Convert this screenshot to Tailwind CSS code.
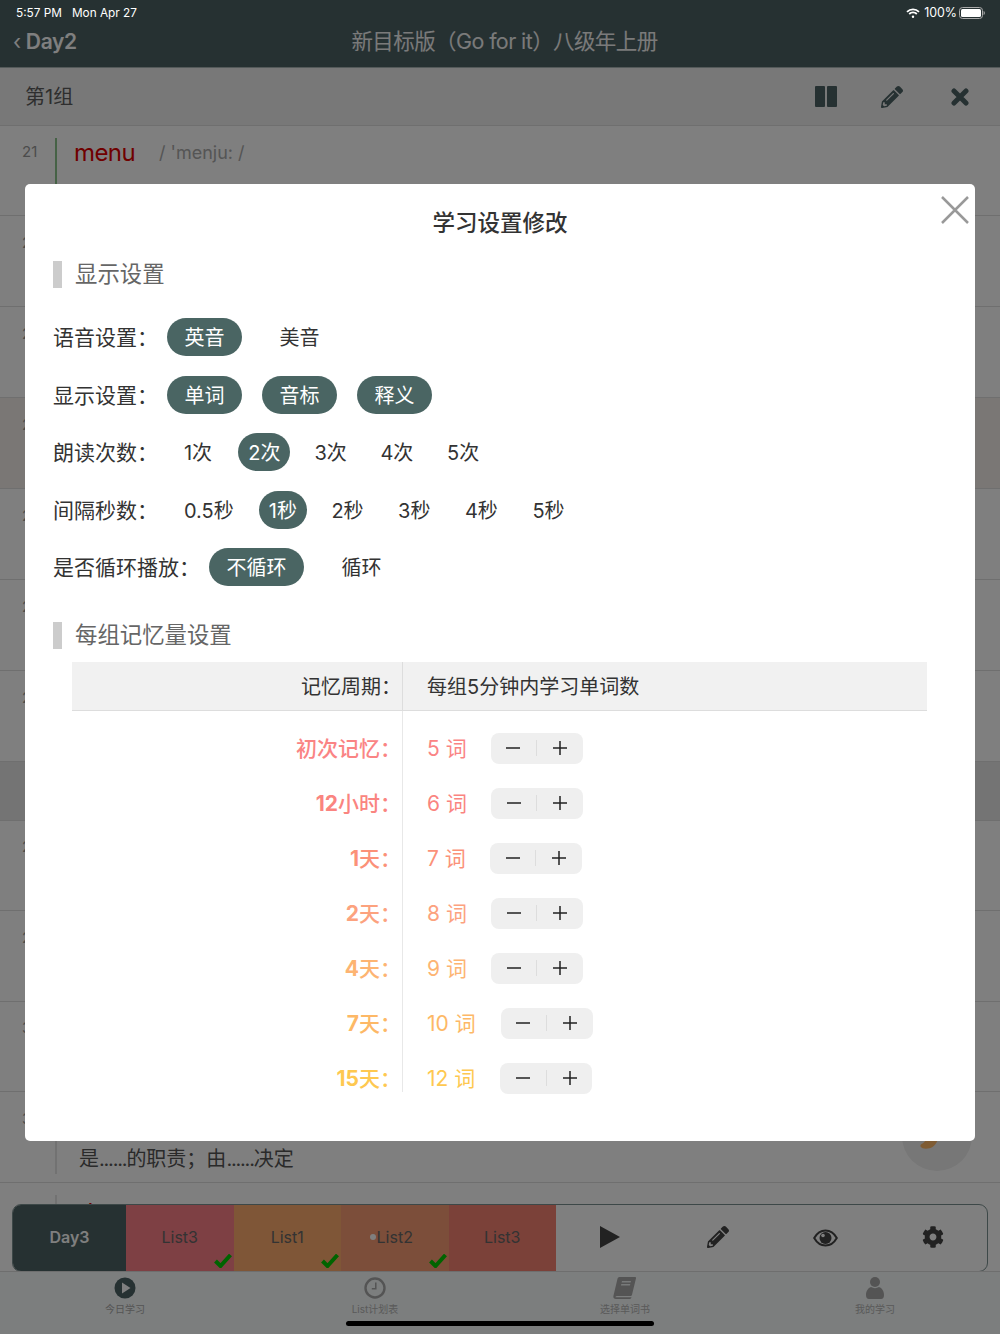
<!DOCTYPE html>
<html lang="zh">
<head>
<meta charset="UTF-8" />
<title>学习设置修改</title>
<script src="https://cdn.jsdelivr.net/npm/@tailwindcss/browser@4"></script>
</head>
<body class="bg-white">
<div class="relative w-[1000px] h-[1334px] overflow-hidden flex flex-col bg-white font-['Inter','Noto_Sans_CJK_SC',sans-serif]">

    <!-- nav -->
    <div class="h-[68px] shrink-0 bg-[#4c6264] border-b border-[#a8b4b4] relative">
        <div class="relative z-20 h-6 px-4 pt-[3px] flex items-center justify-between text-white text-[11.800px]">
            <div class="flex gap-[10px]"><span>5:57 PM</span><span>Mon Apr 27</span></div>
            <div class="flex items-center text-[12.400px] -mr-[1px]">
                <svg width="14" height="11" viewBox="0 0 14 11" fill="none" stroke="#fff" stroke-width="1.800"><path d="M1 3.800a8.500 8.500 0 0 1 12 0M3.200 6a5.400 5.400 0 0 1 7.600 0"/><circle cx="7" cy="8.800" r="1.200" fill="#fff" stroke="none"/></svg>
                <span class="ml-[4px] mr-[2px]">100%</span>
                <svg width="26" height="12" viewBox="0 0 26 12"><rect x=".5" y=".5" width="23" height="11" rx="3" fill="none" stroke="#aaa"/><rect x="2" y="2" width="20" height="8" rx="1.500" fill="#fff"/><path d="M24.600 4v4c.8-.3 1.200-1 1.200-2s-.4-1.700-1.200-2z" fill="#aaa"/></svg>
            </div>
        </div>
        <div class="flex items-center h-[35px] relative">
            <div class="absolute left-[13px] text-white text-[21px] font-semibold tracking-[-0.3px] leading-[35px]"><span class="font-normal">‹</span> Day2</div>
            <div class="w-full pl-[9px] text-center text-[21.500px] tracking-[-0.6px] leading-[35px] text-[#f4f4f4]">新目标版（Go for it）八级年上册</div>
        </div>
    </div>

    <!-- group bar -->
    <div class="h-[58px] shrink-0 bg-[#f0f0f0] border-b border-[#dedede] flex items-center pl-[25px]">
        <div class="text-[20px] text-[#5c5c5c]">第1组</div>
        <div class="ml-auto flex items-center text-[#4c6264]">
            <div class="w-[66px] pl-[2px] flex justify-center"><svg width="24" height="22" viewBox="0 0 24 22" fill="#4c6264"><rect x="1" y="0" width="10" height="21" rx="1"/><rect x="13" y="0" width="10" height="21" rx="1"/></svg></div>
            <div class="w-[68px] flex justify-center"><svg width="22" height="22" viewBox="0 0 512 512" fill="#4c6264"><path d="M497.900 142.100l-46.100 46.100c-4.700 4.700-12.300 4.700-17 0l-111-111c-4.700-4.700-4.700-12.300 0-17l46.100-46.100c18.700-18.700 49.100-18.700 67.900 0l60.100 60.100c18.800 18.700 18.800 49.100 0 67.900zM284.200 99.800L21.600 362.400.4 483.900c-2.900 16.400 11.400 30.600 27.800 27.800l121.500-21.300 262.600-262.600c4.700-4.700 4.700-12.300 0-17l-111-111c-4.800-4.700-12.400-4.700-17.100 0zM124.100 339.900c-5.500-5.500-5.500-14.300 0-19.800l154-154c5.500-5.500 14.300-5.500 19.800 0s5.500 14.300 0 19.800l-154 154c-5.500 5.500-14.300 5.500-19.800 0zM88 424h48v36.300l-64.500 11.300-31.100-31.100L51.700 376H88v48z"/></svg></div>
            <div class="w-[74px] pr-[6px] flex justify-center"><svg width="18" height="18" viewBox="0 0 18 18" stroke="#4c6264" stroke-width="5" stroke-linecap="round"><path d="M3 3l12 12M15 3L3 15"/></svg></div>
        </div>
    </div>

    <!-- word list behind the dialog -->
    <div class="relative flex-1 overflow-hidden text-[#999]">
        <div class="h-[90px] border-b border-[#dedede] flex pt-[12px]">
            <div class="w-[55px] pl-[22px] pt-[3px] text-[15px]">21</div>
            <div class="border-l-2 border-[#8cc48c] pl-[17px] h-[70px]">
                <div class="flex items-baseline -mt-[3px]"><span class="text-[24px] tracking-[-0.6px] text-[#e00000]">menu</span><span class="ml-[24px] -translate-y-0.5 text-[18px] text-[#aaa]">/ 'menju: /</span></div>
                <div class="pl-[17px] mt-[9px] text-[20px] text-[#555]">n. 菜单</div>
            </div>
        </div>
        <div class="h-[91px] border-b border-[#dedede] pl-[22px] pt-[16px] text-[15px]">22</div>
        <div class="h-[91px] border-b border-[#dedede] pl-[22px] pt-[16px] text-[15px]">23</div>
        <div class="h-[91px] border-b border-[#dedede] bg-[#f4eeea] pl-[22px] pt-[16px] text-[15px]">24</div>
        <div class="h-[91px] border-b border-[#dedede] pl-[22px] pt-[16px] text-[15px]">25</div>
        <div class="h-[91px] border-b border-[#dedede] pl-[22px] pt-[16px] text-[15px]">26</div>
        <div class="h-[91px] border-b border-[#dedede] pl-[22px] pt-[16px] text-[15px]">27</div>
        <div class="h-[59px] bg-[#e8e8e8] border-b border-[#dedede]"></div>
        <div class="h-[90px] border-b border-[#dedede] pl-[22px] pt-[15px] text-[15px]">28</div>
        <div class="h-[91px] border-b border-[#dedede] pl-[22px] pt-[16px] text-[15px]">29</div>
        <div class="h-[90px] border-b border-[#dedede] pl-[22px] pt-[15px] text-[15px]">30</div>
        <div class="h-[91px] border-b border-[#dedede] flex pt-[12px]">
            <div class="w-[55px] pl-[22px] pt-[4px] text-[15px]">31</div>
            <div class="border-l-2 border-[#e4e4e4] pl-[22px] h-[70px] flex items-end">
                <div class="text-[20px] text-[#555]">是<span class="tracking-[-1.200px]">......</span>的职责；由<span class="tracking-[-1.200px]">......</span>决定</div>
            </div>
        </div>
        <div class="flex pt-[12px]">
            <div class="w-[55px] pl-[22px] pt-[6px] text-[15px]">32</div>
            <div class="border-l-2 border-[#e4e4e4] pl-[17px]">
                <span class="text-[24px] text-[#e00000]">alarm</span><span class="ml-[10px] text-[19px] text-[#aaa]">/ ə'lɑ:m /</span>
            </div>
        </div>
        <!-- round speaker button -->
        <div class="absolute left-[902px] top-[975px] w-[70px] h-[70px] rounded-full bg-[#eeeeee]">
            <svg class="absolute left-[18px] top-[30px]" width="20" height="22" viewBox="0 0 20 22" fill="#ffb868"><path d="M7 0h12.500c-.5 7-2.500 13-7 16-3.500 2-10 2.500-12-.5-.5-1.500.5-2.500 2-3 2-1 3-3 3.500-5z"/></svg>
        </div>
    </div>

    <!-- play bar -->
    <div class="absolute left-[12px] top-[1204px] w-[976px] h-[68px] rounded-[9px] border border-[#7b9090] bg-[#ffffff] overflow-hidden flex text-[16px] text-[#666]">
        <div class="w-[113px] bg-[#4c6264] flex items-center justify-center text-white font-semibold pb-[2px]">Day3</div>
        <div class="w-[107.500px] bg-[#fc8088] relative flex items-center justify-center pb-[2px]">List3
            <svg class="absolute right-[2px] bottom-[3px]" width="18" height="14" viewBox="0 0 18 14" fill="none" stroke="#00c800" stroke-width="4"><path d="M1.500 7l5 5 10-11"/></svg>
        </div>
        <div class="w-[107.500px] bg-[#ffac6e] relative flex items-center justify-center pb-[2px]">List1
            <svg class="absolute right-[2px] bottom-[3px]" width="18" height="14" viewBox="0 0 18 14" fill="none" stroke="#00c800" stroke-width="4"><path d="M1.500 7l5 5 10-11"/></svg>
        </div>
        <div class="w-[107.500px] bg-[#f89c74] relative flex items-center justify-center pb-[2px]"><span class="w-[6px] h-[6px] -ml-[7px] mr-[1px] rounded-full bg-white"></span>List2
            <svg class="absolute right-[2px] bottom-[3px]" width="18" height="14" viewBox="0 0 18 14" fill="none" stroke="#00c800" stroke-width="4"><path d="M1.500 7l5 5 10-11"/></svg>
        </div>
        <div class="w-[107.500px] bg-[#f68272] flex items-center justify-center pb-[2px]">List3</div>
        <div class="flex-1 flex items-center justify-center pb-[2px]"><svg width="20" height="22" viewBox="0 0 20 22" fill="#444"><path d="M0 0l20 11L0 22z"/></svg></div>
        <div class="flex-1 flex items-center justify-center pb-[2px]"><svg width="22" height="22" viewBox="0 0 512 512" fill="#444"><path d="M497.900 142.100l-46.100 46.100c-4.700 4.700-12.300 4.700-17 0l-111-111c-4.700-4.700-4.700-12.300 0-17l46.100-46.100c18.700-18.700 49.100-18.700 67.900 0l60.100 60.100c18.800 18.700 18.800 49.100 0 67.900zM284.200 99.800L21.600 362.400.4 483.900c-2.900 16.400 11.400 30.600 27.800 27.800l121.500-21.300 262.600-262.600c4.700-4.700 4.700-12.300 0-17l-111-111c-4.800-4.700-12.400-4.700-17.100 0zM124.100 339.900c-5.500-5.500-5.500-14.300 0-19.800l154-154c5.500-5.500 14.300-5.500 19.800 0s5.500 14.300 0 19.800l-154 154c-5.500 5.500-14.300 5.500-19.800 0zM88 424h48v36.300l-64.500 11.300-31.100-31.100L51.700 376H88v48z"/></svg></div>
        <div class="flex-1 flex items-center justify-center"><svg width="25" height="18" viewBox="0 0 25 18"><path d="M1.200 9C4 4 8 1.500 12.500 1.500S21 4 23.800 9c-2.800 5-6.800 7.500-11.300 7.500S4 14 1.200 9z" fill="none" stroke="#444" stroke-width="2"/><circle cx="12.500" cy="9" r="6" fill="#444"/><circle cx="10" cy="6.500" r="1.800" fill="#fff"/></svg></div>
        <div class="flex-1 flex items-center justify-center pb-[2px]"><svg width="22" height="22" viewBox="0 0 512 512" fill="#444"><path d="M487.400 315.700l-42.600-24.600c4.300-23.200 4.300-47 0-70.200l42.600-24.600c4.900-2.800 7.100-8.600 5.500-14-11.100-35.600-30-67.800-54.700-94.600-3.800-4.100-10-5.100-14.800-2.300L380.800 110c-17.900-15.400-38.500-27.300-60.800-35.100V25.800c0-5.600-3.900-10.500-9.400-11.700-36.700-8.200-74.300-7.800-109.200 0-5.500 1.200-9.400 6.100-9.400 11.700V75c-22.200 7.900-42.800 19.800-60.800 35.100L88.700 85.500c-4.900-2.800-11-1.900-14.800 2.300-24.700 26.700-43.600 58.900-54.700 94.600-1.700 5.400.6 11.200 5.500 14L67.300 221c-4.300 23.200-4.300 47 0 70.200l-42.600 24.600c-4.900 2.800-7.100 8.600-5.500 14 11.100 35.600 30 67.800 54.700 94.600 3.800 4.100 10 5.100 14.800 2.300l42.600-24.600c17.900 15.400 38.500 27.300 60.800 35.100v49.200c0 5.600 3.900 10.500 9.400 11.700 36.700 8.200 74.300 7.800 109.200 0 5.500-1.200 9.400-6.100 9.400-11.700v-49.200c22.200-7.900 42.800-19.800 60.800-35.100l42.600 24.600c4.900 2.800 11 1.900 14.800-2.300 24.700-26.700 43.600-58.900 54.700-94.600 1.500-5.500-.7-11.300-5.600-14.100zM256 336c-44.100 0-80-35.900-80-80s35.900-80 80-80 80 35.900 80 80-35.900 80-80 80z"/></svg></div>
    </div>

    <!-- tab bar -->
    <div class="h-[63px] shrink-0 bg-[#f8fcfc] border-t border-[#dcdcdc] grid grid-cols-4 text-[10px] text-[#b4b4b4] relative">
        <div class="flex flex-col items-center pt-[5px]">
            <svg width="22" height="22" viewBox="0 0 22 22"><circle cx="11" cy="11" r="10.500" fill="#4c6264"/><path d="M8 5.500l8.500 5.500L8 16.500z" fill="#fff"/></svg>
            <div class="mt-[4px] leading-[12px] text-[#aaa]">今日学习</div>
        </div>
        <div class="flex flex-col items-center pt-[5px]">
            <svg width="22" height="22" viewBox="0 0 22 22" fill="none" stroke="#a8a8a8"><circle cx="11" cy="11" r="9.500" stroke-width="2.400"/><path d="M11.800 5.500v6.300H7.800" stroke-width="1.500"/></svg>
            <div class="mt-[4px] leading-[12px]">List计划表</div>
        </div>
        <div class="flex flex-col items-center pt-[5px]">
            <svg width="24" height="22" viewBox="0 0 24 22" fill="#a8a8a8"><path d="M6.500 0H22c.8 0 1.200.6 1 1.300l-4 16.500c-.2.800-.8 1.200-1.500 1.200H3.800c-1 0-1.300.8-1.300 1.200h16c-.4 1-1 1.800-2 1.800H3C1.200 22 0 20.800.4 19L4.500 1.800C4.800.7 5.500 0 6.500 0z"/><path d="M9 4h9l-.4 1.600h-9zM8.300 7h9l-.4 1.600h-9z" fill="#f0f4f4"/></svg>
            <div class="mt-[4px] leading-[12px]">选择单词书</div>
        </div>
        <div class="flex flex-col items-center pt-[5px]">
            <svg width="18" height="22" viewBox="0 0 18 22" fill="#a8a8a8"><circle cx="9" cy="5" r="5"/><path d="M0 18c0-4 2-7 5-8 2.500 1.500 5.500 1.500 8 0 3 1 5 4 5 8 0 2.500-1 4-3 4H3c-2 0-3-1.500-3-4z"/></svg>
            <div class="mt-[4px] leading-[12px]">我的学习</div>
        </div>
    </div>

    <!-- dim layer + dialog -->
    <div class="absolute inset-0 z-10 bg-black/50 pt-[184px] px-[25px]">
        <div class="relative h-[957px] rounded-[5px] bg-white">
            <svg class="absolute right-[6px] top-[12px]" width="28" height="28" viewBox="0 0 28 28" stroke="#999" stroke-width="2.500"><path d="M1 1l26 26M27 1L1 27"/></svg>
            <div class="h-[76px] text-center text-[22.500px] leading-[78px] font-medium text-[#333]">学习设置修改</div>

            <div class="ml-[28px] mt-[1px] h-[27px] flex items-center">
                <span class="w-[9px] h-[27px] bg-[#cccccc]"></span>
                <span class="ml-[13px] pb-[2px] text-[22.400px] text-[#666]">显示设置</span>
            </div>

            <div class="ml-[28px] mt-[30px] flex flex-col gap-[19.500px] text-[20px] text-[#333] leading-[40px]">
                <div class="flex h-[38px]">
                    <div class="w-[114px] text-[21px]">语音设置：</div>
                    <div class="flex gap-[20px] text-center">
                        <div class="w-[75px] rounded-full bg-[#4a6563] text-white">英音</div>
                        <div class="w-[75px]">美音</div>
                    </div>
                </div>
                <div class="flex h-[38px]">
                    <div class="w-[114px] text-[21px]">显示设置：</div>
                    <div class="flex gap-[20px] text-center">
                        <div class="w-[75px] rounded-full bg-[#4a6563] text-white">单词</div>
                        <div class="w-[75px] rounded-full bg-[#4a6563] text-white">音标</div>
                        <div class="w-[75px] rounded-full bg-[#4a6563] text-white">释义</div>
                    </div>
                </div>
                <div class="flex h-[38px]">
                    <div class="w-[119px] text-[21px]">朗读次数：</div>
                    <div class="flex gap-[14.300px] text-center">
                        <div class="w-[52px]">1次</div>
                        <div class="w-[52px] rounded-full bg-[#4a6563] text-white">2次</div>
                        <div class="w-[52px]">3次</div>
                        <div class="w-[52px]">4次</div>
                        <div class="w-[52px]">5次</div>
                    </div>
                </div>
                <div class="flex h-[38px]">
                    <div class="w-[121px] text-[21px]">间隔秒数：</div>
                    <div class="flex gap-[15px]">
                        <div class="px-[10px]">0.5秒</div>
                        <div class="px-[10px] rounded-full bg-[#4a6563] text-white">1秒</div>
                        <div class="px-[10px] -ml-[0.5px]">2秒</div>
                        <div class="px-[10px] -ml-[0.5px]">3秒</div>
                        <div class="px-[10px] -ml-[0.5px]">4秒</div>
                        <div class="px-[10px] -ml-[0.5px]">5秒</div>
                    </div>
                </div>
                <div class="flex h-[38px]">
                    <div class="w-[156px] text-[21px]">是否循环播放：</div>
                    <div class="flex gap-[20px]">
                        <div class="px-[17.500px] rounded-full bg-[#4a6563] text-white">不循环</div>
                        <div class="px-[17.500px]">循环</div>
                    </div>
                </div>
            </div>

            <div class="ml-[28px] mt-[36px] h-[27px] flex items-center">
                <span class="w-[9px] h-[27px] bg-[#cccccc]"></span>
                <span class="ml-[13px] pb-[2px] text-[22.400px] text-[#666]">每组记忆量设置</span>
            </div>

            <div class="ml-[47px] w-[855px] mt-[13px]">
                <div class="h-[49px] flex bg-[#f1f1f1] border-b border-[#dddddd] text-[20px] text-[#333] leading-[50px]">
                    <div class="w-[330px] text-right pr-[1px]">记忆周期：</div>
                    <div class="pl-[24px] border-l border-[#dddddd]">每组5分钟内学习单词数</div>
                </div>
                <div class="flex h-[381px] text-[21px]">
                    <div class="w-[330px] pt-[9.500px] text-right pr-[1px] leading-[56px] font-medium">
                        <div class="h-[55px] text-[#fa8484]">初次记忆：</div>
                        <div class="h-[55px] text-[#fa8480]"><b class="font-bold">12</b>小时：</div>
                        <div class="h-[55px] text-[#fb9178]"><b class="font-bold">1</b>天：</div>
                        <div class="h-[55px] text-[#fca27e]"><b class="font-bold">2</b>天：</div>
                        <div class="h-[55px] text-[#fdb472]"><b class="font-bold">4</b>天：</div>
                        <div class="h-[55px] text-[#fdb866]"><b class="font-bold">7</b>天：</div>
                        <div class="h-[55px] text-[#fec850]"><b class="font-bold">15</b>天：</div>
                    </div>
                    <div class="border-l border-[#e8e8e8] pl-[24px] pt-[9.500px] leading-[56px]">
                        <div class="h-[55px] flex items-center text-[#fa8484]"><span class="pt-[1px]">5 词</span><div class="ml-[24px] w-[92px] h-[31px] rounded-[8px] bg-[#efefef] flex items-center"><span class="flex-1 flex justify-center"><svg width="14" height="14" viewBox="0 0 14 14" stroke="#222" stroke-width="1.500"><path d="M0 7h14"/></svg></span><span class="w-px h-[16px] bg-[#dddddd]"></span><span class="flex-1 flex justify-center"><svg width="14" height="14" viewBox="0 0 14 14" stroke="#222" stroke-width="1.500"><path d="M0 7h14M7 0v14"/></svg></span></div></div>
                        <div class="h-[55px] flex items-center text-[#fa8480]"><span class="pt-[1px]">6 词</span><div class="ml-[24px] w-[92px] h-[31px] rounded-[8px] bg-[#efefef] flex items-center"><span class="flex-1 flex justify-center"><svg width="14" height="14" viewBox="0 0 14 14" stroke="#222" stroke-width="1.500"><path d="M0 7h14"/></svg></span><span class="w-px h-[16px] bg-[#dddddd]"></span><span class="flex-1 flex justify-center"><svg width="14" height="14" viewBox="0 0 14 14" stroke="#222" stroke-width="1.500"><path d="M0 7h14M7 0v14"/></svg></span></div></div>
                        <div class="h-[55px] flex items-center text-[#fb9178]"><span class="pt-[1px]">7 词</span><div class="ml-[24px] w-[92px] h-[31px] rounded-[8px] bg-[#efefef] flex items-center"><span class="flex-1 flex justify-center"><svg width="14" height="14" viewBox="0 0 14 14" stroke="#222" stroke-width="1.500"><path d="M0 7h14"/></svg></span><span class="w-px h-[16px] bg-[#dddddd]"></span><span class="flex-1 flex justify-center"><svg width="14" height="14" viewBox="0 0 14 14" stroke="#222" stroke-width="1.500"><path d="M0 7h14M7 0v14"/></svg></span></div></div>
                        <div class="h-[55px] flex items-center text-[#fca27e]"><span class="pt-[1px]">8 词</span><div class="ml-[24px] w-[92px] h-[31px] rounded-[8px] bg-[#efefef] flex items-center"><span class="flex-1 flex justify-center"><svg width="14" height="14" viewBox="0 0 14 14" stroke="#222" stroke-width="1.500"><path d="M0 7h14"/></svg></span><span class="w-px h-[16px] bg-[#dddddd]"></span><span class="flex-1 flex justify-center"><svg width="14" height="14" viewBox="0 0 14 14" stroke="#222" stroke-width="1.500"><path d="M0 7h14M7 0v14"/></svg></span></div></div>
                        <div class="h-[55px] flex items-center text-[#fdb472]"><span class="pt-[1px]">9 词</span><div class="ml-[24px] w-[92px] h-[31px] rounded-[8px] bg-[#efefef] flex items-center"><span class="flex-1 flex justify-center"><svg width="14" height="14" viewBox="0 0 14 14" stroke="#222" stroke-width="1.500"><path d="M0 7h14"/></svg></span><span class="w-px h-[16px] bg-[#dddddd]"></span><span class="flex-1 flex justify-center"><svg width="14" height="14" viewBox="0 0 14 14" stroke="#222" stroke-width="1.500"><path d="M0 7h14M7 0v14"/></svg></span></div></div>
                        <div class="h-[55px] flex items-center text-[#fdb866]"><span class="pt-[1px]">10 词</span><div class="ml-[25px] w-[92px] h-[31px] rounded-[8px] bg-[#efefef] flex items-center"><span class="flex-1 flex justify-center"><svg width="14" height="14" viewBox="0 0 14 14" stroke="#222" stroke-width="1.500"><path d="M0 7h14"/></svg></span><span class="w-px h-[16px] bg-[#dddddd]"></span><span class="flex-1 flex justify-center"><svg width="14" height="14" viewBox="0 0 14 14" stroke="#222" stroke-width="1.500"><path d="M0 7h14M7 0v14"/></svg></span></div></div>
                        <div class="h-[55px] flex items-center text-[#fec850]"><span class="pt-[1px]">12 词</span><div class="ml-[25px] w-[92px] h-[31px] rounded-[8px] bg-[#efefef] flex items-center"><span class="flex-1 flex justify-center"><svg width="14" height="14" viewBox="0 0 14 14" stroke="#222" stroke-width="1.500"><path d="M0 7h14"/></svg></span><span class="w-px h-[16px] bg-[#dddddd]"></span><span class="flex-1 flex justify-center"><svg width="14" height="14" viewBox="0 0 14 14" stroke="#222" stroke-width="1.500"><path d="M0 7h14M7 0v14"/></svg></span></div></div>
                    </div>
                </div>
            </div>
        </div>
    </div>

    <div class="absolute z-20 left-[346px] top-[1321px] w-[308px] h-[5px] rounded-full bg-black"></div>
</div>
</body>
</html>
